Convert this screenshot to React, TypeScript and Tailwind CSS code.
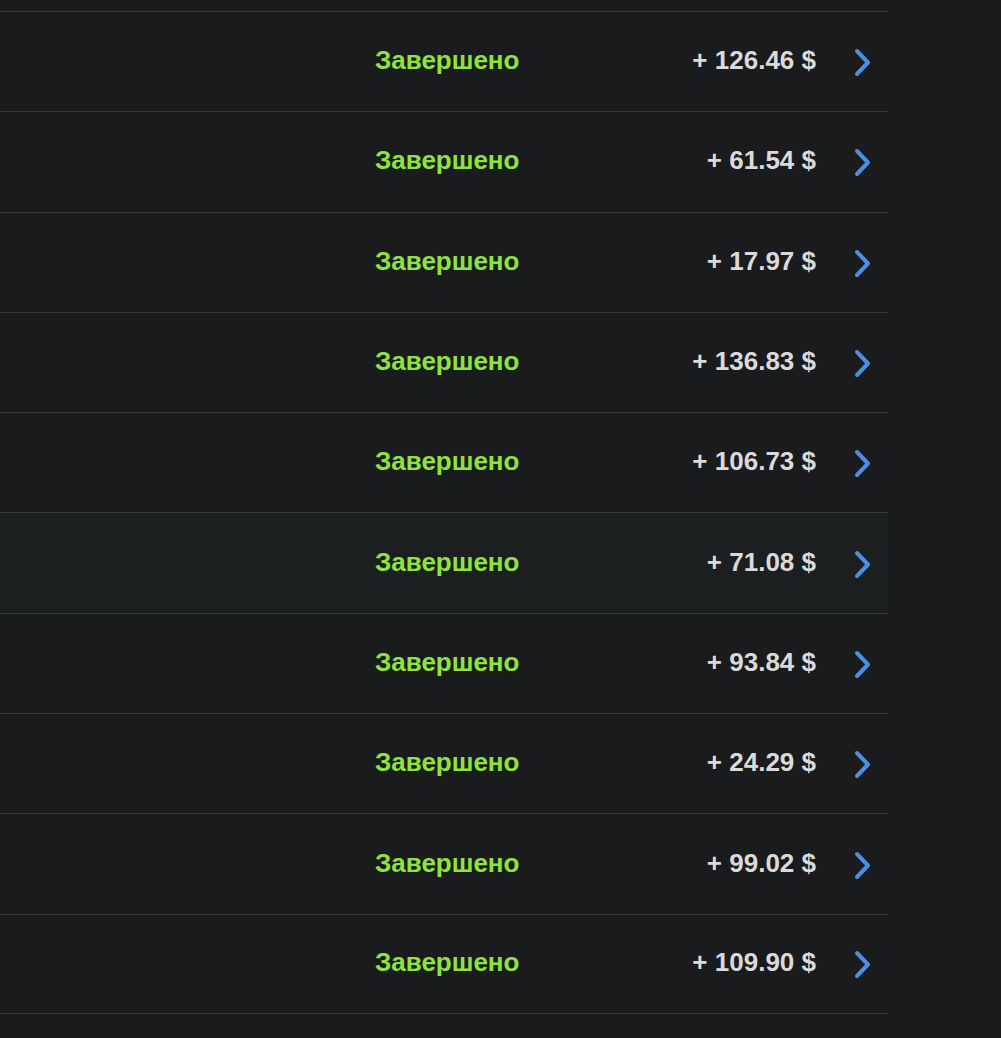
const rows = [
  "126.46",
  "61.54",
  "17.97",
  "136.83",
  "106.73",
  "71.08",
  "93.84",
  "24.29",
  "99.02",
  "109.90",
];

function Chevron() {
  return (
    <svg width="24" height="30" viewBox="0 0 24 30" fill="none">
      <path
        d="M6 4 L17 15.5 L6 27"
        stroke="#4a90e2"
        strokeWidth="4"
        strokeLinecap="round"
        strokeLinejoin="round"
      />
    </svg>
  );
}

export default function App() {
  return (
    <div className="min-h-screen bg-[#1a1b1d] pt-[11px] font-['Liberation_Sans',Arial,sans-serif]">
      <div className="w-[888px]">
        {rows.map((amount, i) => (
          <div
            key={amount}
            className={`grid h-[100.3px] grid-cols-[375px_1fr_240px_72px] items-center border-t border-[#38393b] pb-[3px] ${
              i === rows.length - 1 ? "border-b" : ""
            } ${i === 5 ? "bg-[#1c1f20]" : ""}`}
          >
            <div />
            <div className="text-[26px] leading-none font-bold text-[#8ee33e]">Завершено</div>
            <div className="text-right text-[26px] leading-none font-bold text-[#dadada]">+ {amount} $</div>
            <div className="flex items-center pt-[4px] pl-[35px]">
              <Chevron />
            </div>
          </div>
        ))}
      </div>
    </div>
  );
}
